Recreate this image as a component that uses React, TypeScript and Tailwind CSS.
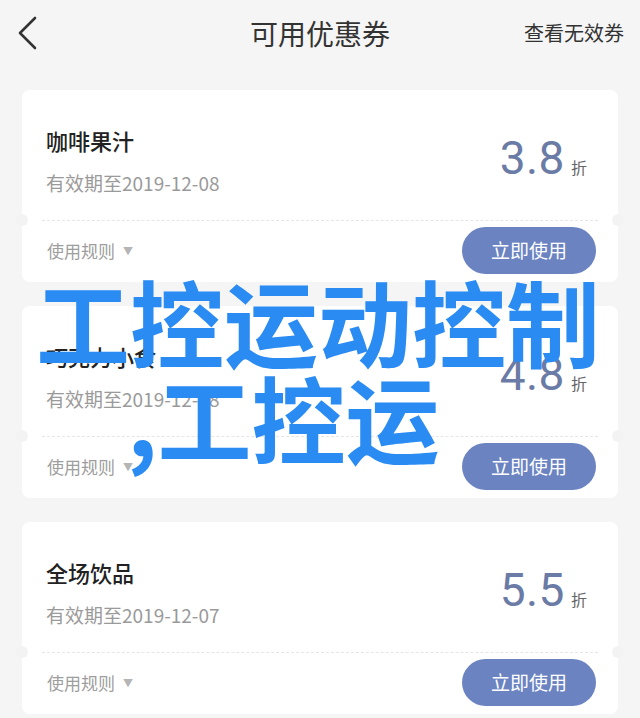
import React from "react";

const cjk = { fontFamily: '"Noto Sans CJK SC", "Noto Sans", sans-serif' };
const num = { fontFamily: 'Roboto, "Noto Sans CJK SC", sans-serif' };

type Coupon = { title: string; date: string; price: string };

const coupons: Coupon[] = [
  { title: "咖啡果汁", date: "有效期至2019-12-08", price: "3.8" },
  { title: "巧克力小食", date: "有效期至2019-12-08", price: "4.8" },
  { title: "全场饮品", date: "有效期至2019-12-07", price: "5.5" },
];

function Card({ c }: { c: Coupon }) {
  return (
    <div className="relative h-[192px] rounded-[8px] bg-white flex flex-col">
      <div className="h-[130px] flex justify-between pl-[24px] pr-[31px]">
        <div className="flex flex-col pt-[35px]">
          <div className="text-[22px] leading-[30px] font-medium text-[#222222]" style={cjk}>
            {c.title}
          </div>
          <div className="mt-[15px] text-[19px] leading-[26px] text-[#9a9a9a]" style={cjk}>
            {c.date}
          </div>
        </div>
        <div className="flex items-baseline pt-[42px]">
          <span className="text-[46px] leading-[52px] text-[#6a7ba6] tracking-[0.5px]" style={num}>
            {c.price}
          </span>
          <span className="ml-[6px] text-[16px] text-[#666666]" style={cjk}>
            折
          </span>
        </div>
      </div>
      <div className="mx-[20px] border-t border-dashed border-[#e6e6e6]" />
      <div className="absolute left-[-6px] top-[124px] w-[12px] h-[12px] rounded-full bg-[#f3f3f3]" />
      <div className="absolute right-[-6px] top-[124px] w-[12px] h-[12px] rounded-full bg-[#f3f3f3]" />
      <div className="flex-1 flex items-center justify-between pl-[25px] pr-[22px] pb-[2px]">
        <div className="flex items-center text-[17px] text-[#9d9d9d]" style={cjk}>
          <span>使用规则</span>
          <span className="ml-[8px] text-[10px] text-[#b5b5b5]">▼</span>
        </div>
        <button
          className="w-[134px] h-[47px] rounded-full bg-[#6b84c1] text-white text-[19px] flex items-center justify-center"
          style={cjk}
        >
          立即使用
        </button>
      </div>
    </div>
  );
}

export default function App() {
  return (
    <div className="relative w-[640px] h-[718px] overflow-hidden bg-[#f5f5f5]">
      <div className="h-[66px] flex items-center justify-between px-[18px]">
        <svg width="20" height="34" viewBox="0 0 20 34">
          <polyline points="17,2 2,17 17,32" fill="none" stroke="#333333" strokeWidth="2.6" strokeLinecap="round" strokeLinejoin="round" />
        </svg>
        <div className="absolute left-0 right-0 top-[14px] text-center text-[28px] leading-[38px] text-[#333333] pointer-events-none" style={cjk}>
          可用优惠券
        </div>
        <div className="text-[20px] text-[#333333] mr-[-2px]" style={cjk}>
          查看无效券
        </div>
      </div>
      <div className="flex flex-col gap-[24px] px-[22px] pt-[24px]">
        {coupons.map((c) => (
          <Card key={c.price} c={c} />
        ))}
      </div>
      <div className="absolute inset-0 pointer-events-none" style={cjk}>
        <div className="absolute left-[36px] top-[270px] text-[94px] leading-[100px] font-bold text-[#2a8bf2] whitespace-nowrap">
          工控运动控制
        </div>
        <div className="absolute left-[127px] top-[366px] text-[94px] leading-[100px] font-bold text-[#2a8bf2] whitespace-nowrap">
          ,工控运
        </div>
      </div>
    </div>
  );
}
